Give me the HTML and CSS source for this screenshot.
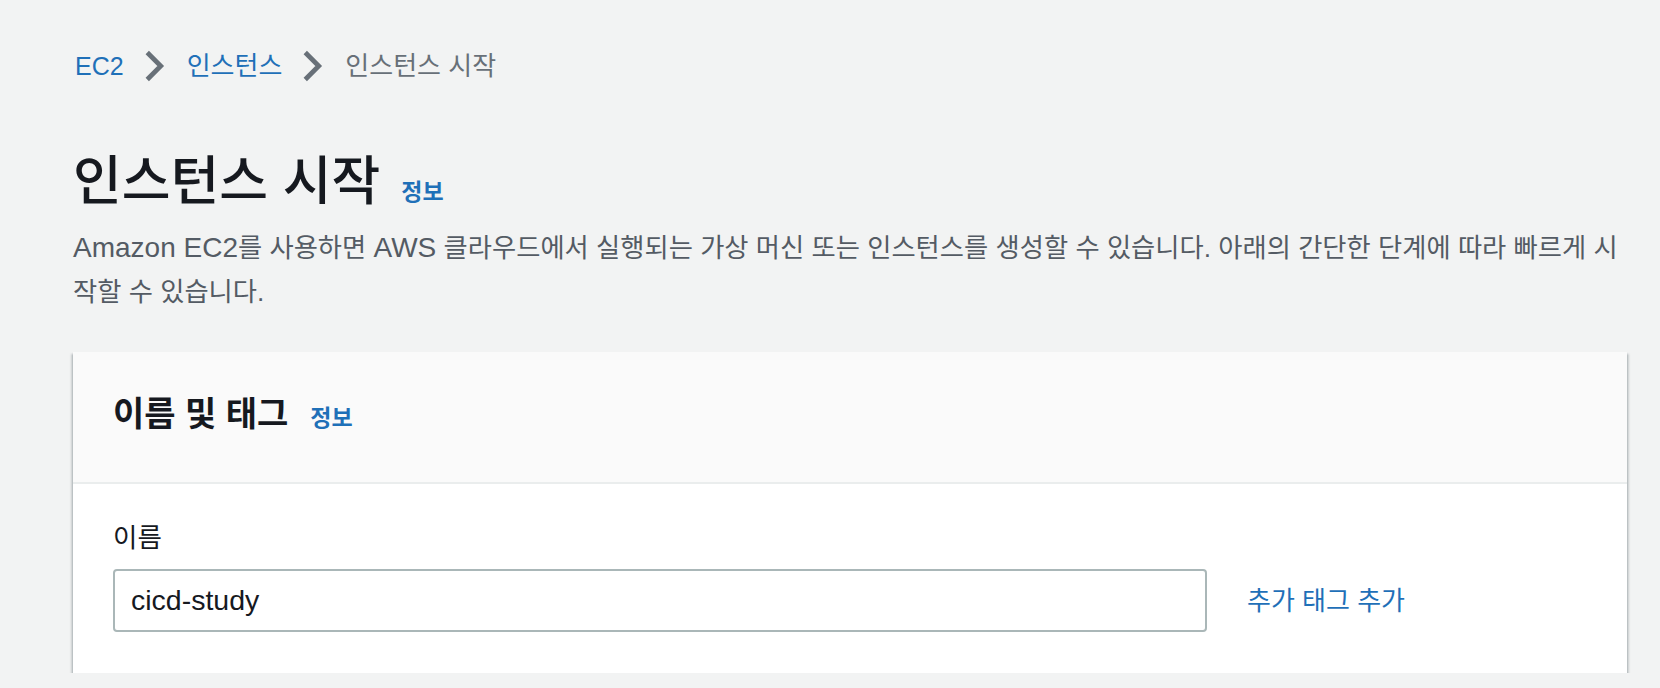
FILE: index.html
```html
<!DOCTYPE html>
<html lang="ko">
<head>
<meta charset="utf-8">
<title>인스턴스 시작</title>
<link rel="stylesheet" href="styles.css">
</head>
<body>
<div class="page">
  <nav class="crumbs">
    <a class="crumb-link en-crumb" href="#">EC2</a>
    <svg class="chev" viewBox="0 0 16 16" aria-hidden="true"><path d="M5 2l6 6-6 6"/></svg>
    <a class="crumb-link" href="#">인스턴스</a>
    <svg class="chev" viewBox="0 0 16 16" aria-hidden="true"><path d="M5 2l6 6-6 6"/></svg>
    <span class="crumb-current">인스턴스 시작</span>
  </nav>

  <header class="page-head">
    <div class="title-row">
      <h1 class="title">인스턴스 시작</h1>
      <a class="info info-title" href="#">정보</a>
    </div>
    <p class="desc"><span class="en">Amazon EC2</span>를 사용하면 <span class="en">AWS</span> 클라우드에서 실행되는 가상 머신 또는 인스턴스를 생성할 수 있습니다. 아래의 간단한 단계에 따라 빠르게 시작할 수 있습니다.</p>
  </header>

  <section class="card">
    <div class="card-head">
      <h2 class="card-title">이름 및 태그</h2>
      <a class="info info-card" href="#">정보</a>
    </div>
    <div class="card-body">
      <div class="label">이름</div>
      <div class="field-row">
        <div class="input">cicd-study</div>
        <a class="add-link" href="#">추가 태그 추가</a>
      </div>
    </div>
  </section>
</div>
</body>
</html>
```

FILE: styles.css
```css
* { box-sizing: border-box; }

html, body {
  margin: 0;
  padding: 0;
  background: #f2f3f3;
}

body {
  font-family: "Liberation Sans", "Noto Sans CJK KR", sans-serif;
  color: #16191f;
}

a { text-decoration: none; }

.page {
  padding: 44px 33px 0 73px;
}

/* breadcrumbs */
.crumbs {
  display: flex;
  align-items: center;
  height: 44px;
  font-size: 26px;
  line-height: 44px;
}

.crumb-link { color: #1f70b8; }
.en-crumb { font-size: 25px; padding-left: 2px; }
.crumb-current { color: #687078; }

.chev {
  width: 36px;
  height: 36px;
  margin: 0 15px 0 12px;
  fill: none;
  stroke: #687078;
  stroke-width: 2.1;
  stroke-linejoin: miter;
}

/* page header */
.page-head {
  margin-top: 62px;
}

.title-row {
  display: flex;
  align-items: baseline;
}

.title {
  margin: 0;
  font-size: 53px;
  line-height: 64px;
  font-weight: 500;
  color: #16191f;
}

.info {
  color: #1f70b8;
  font-weight: 700;
  font-size: 23px;
}

.info-title { margin-left: 21px; }

.desc {
  margin: 12px 0 0;
  font-size: 26.3px;
  line-height: 44px;
  color: #545b64;
}

.desc .en { font-size: 28px; }

/* card */
.card {
  margin-top: 38px;
  background: #ffffff;
  box-shadow: 0 2px 2px 0 rgba(0, 28, 36, 0.3),
              2px 2px 2px 0 rgba(0, 28, 36, 0.15),
              -2px 2px 2px 0 rgba(0, 28, 36, 0.15);
}

.card-head {
  display: flex;
  align-items: baseline;
  padding: 38px 40px 44px;
  background: #fafafa;
  border-bottom: 2px solid #eaeded;
}

.card-title {
  margin: 0;
  font-size: 34px;
  line-height: 48px;
  font-weight: 700;
  color: #16191f;
}

.info-card { margin-left: 22px; }

.card-body {
  padding: 32px 40px 41px;
}

.label {
  font-size: 26.5px;
  line-height: 44px;
  color: #16191f;
}

.field-row {
  display: flex;
  align-items: center;
  margin-top: 9px;
}

.input {
  width: 1094px;
  height: 63px;
  border: 2px solid #aab7b8;
  border-radius: 4px;
  padding: 0 16px;
  font-size: 28.5px;
  line-height: 59px;
  color: #16191f;
  background: #ffffff;
}

.add-link {
  margin-left: 40px;
  color: #1f70b8;
  font-size: 26px;
  line-height: 44px;
}
```
